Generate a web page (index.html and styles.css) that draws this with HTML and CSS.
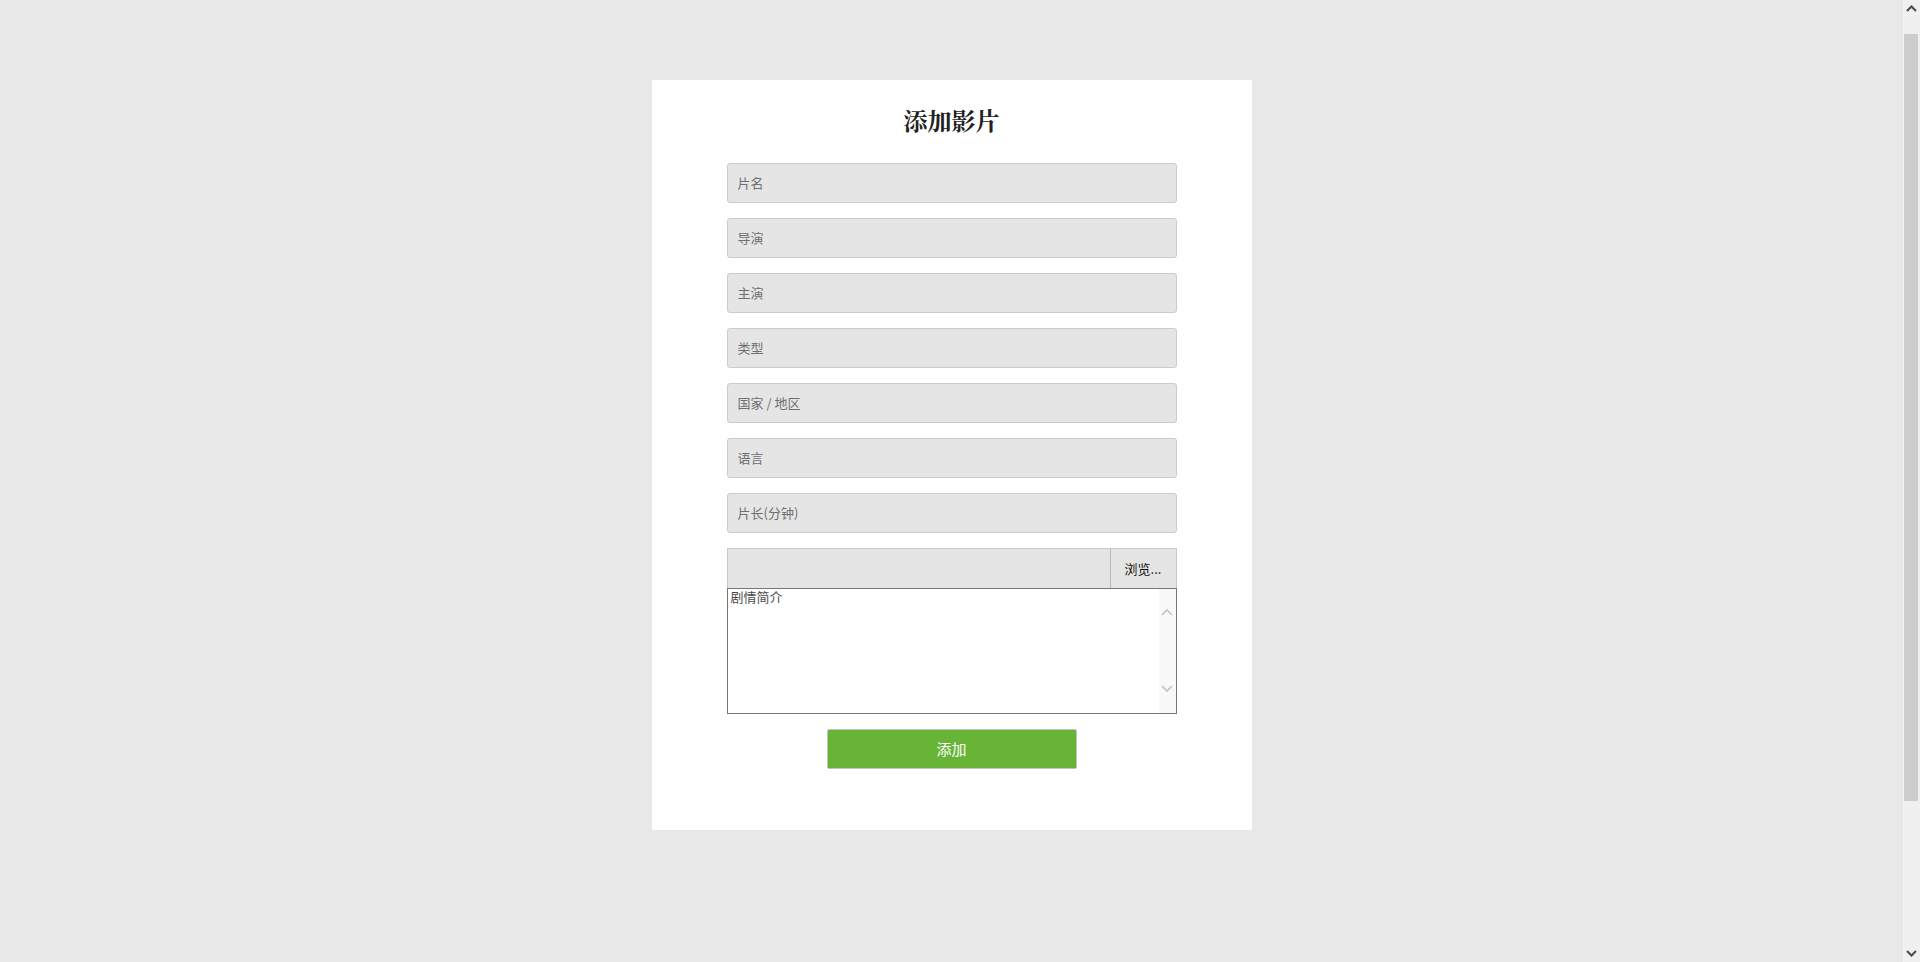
FILE: index.html
```html
<!DOCTYPE html>
<html lang="zh-CN">
<head>
<meta charset="utf-8">
<title>添加影片</title>
<link rel="stylesheet" href="styles.css">
</head>
<body>
<div class="screen">
  <main class="main">
    <form class="card">
      <h1 class="title">添加影片</h1>
      <input class="field" type="text" placeholder="片名">
      <input class="field" type="text" placeholder="导演">
      <input class="field" type="text" placeholder="主演">
      <input class="field" type="text" placeholder="类型">
      <input class="field" type="text" placeholder="国家 / 地区">
      <input class="field" type="text" placeholder="语言">
      <input class="field" type="text" placeholder="片长(分钟)">
      <div class="file-row">
        <div class="file-path"></div>
        <div class="file-btn">浏览...</div>
      </div>
      <div class="textarea-box">
        <textarea class="summary" placeholder="剧情简介"></textarea>
        <div class="ta-scroll">
          <svg width="12" height="8" viewBox="0 0 12 8"><path d="M1 7 L6 2 L11 7" fill="none" stroke="#c2c2c2" stroke-width="1.6"/></svg>
          <svg width="12" height="8" viewBox="0 0 12 8"><path d="M1 1 L6 6 L11 1" fill="none" stroke="#c2c2c2" stroke-width="1.6"/></svg>
        </div>
      </div>
      <button class="submit" type="button">添加</button>
    </form>
  </main>
  <div class="scrollbar">
    <div class="sb-arrow">
      <svg width="11" height="7" viewBox="0 0 11 7"><path d="M1 6 L5.5 1.5 L10 6" fill="none" stroke="#505050" stroke-width="2.2"/></svg>
    </div>
    <div class="sb-track">
      <div class="sb-thumb"></div>
    </div>
    <div class="sb-arrow">
      <svg width="11" height="7" viewBox="0 0 11 7"><path d="M1 1 L5.5 5.5 L10 1" fill="none" stroke="#505050" stroke-width="2.2"/></svg>
    </div>
  </div>
</div>
</body>
</html>
```

FILE: styles.css
```css
html, body {
  margin: 0;
  padding: 0;
  height: 100%;
  overflow: hidden;
}

body {
  background: #e8e8e8;
  font-family: "Noto Sans CJK SC", "Liberation Sans", sans-serif;
  font-size: 13px;
  color: #333;
}

.screen {
  display: flex;
  height: 962px;
}

.main {
  flex: 1;
  display: flex;
  justify-content: center;
  align-items: flex-start;
  padding-top: 80px;
}

.card {
  width: 600px;
  box-sizing: border-box;
  background: #fff;
  padding: 25px 75px 61px;
  display: flex;
  flex-direction: column;
  align-items: center;
}

.title {
  margin: 0 0 28px;
  height: 30px;
  line-height: 30px;
  font-family: "Noto Serif CJK SC", "Noto Sans CJK SC", serif;
  font-size: 24px;
  font-weight: bold;
  color: #222;
}

.field {
  width: 450px;
  height: 40px;
  box-sizing: border-box;
  margin: 0 0 15px;
  padding: 0 0 2px 10px;
  border: 1px solid #cbcbcb;
  border-radius: 3px;
  background: #e5e5e5;
  font-family: "Noto Sans CJK SC", "Liberation Sans", sans-serif;
  font-size: 13px;
  color: #555;
  outline: none;
}

.field::placeholder {
  color: #6f6f6f;
}

.file-row {
  width: 450px;
  height: 40px;
  box-sizing: border-box;
  display: flex;
  border: 1px solid #c8c8c8;
  border-bottom: none;
  background: #e5e5e5;
}

.file-path {
  flex: 1;
}

.file-btn {
  width: 66px;
  box-sizing: border-box;
  border-left: 1px solid #b9b9b9;
  display: flex;
  align-items: center;
  justify-content: center;
  color: #111;
  font-size: 13px;
  padding-bottom: 1px;
}

.textarea-box {
  width: 450px;
  height: 126px;
  box-sizing: border-box;
  border: 1px solid #767676;
  background: #fff;
  display: flex;
  margin-bottom: 15px;
}

.summary {
  flex: 1;
  border: none;
  outline: none;
  resize: none;
  margin: 0;
  padding: 0 3px;
  font-family: "Noto Sans CJK SC", "Liberation Sans", sans-serif;
  font-size: 13px;
  line-height: 16px;
  color: #333;
  background: transparent;
}

.summary::placeholder {
  color: #4a4a4a;
}

.ta-scroll {
  width: 17px;
  background: #f8f8f8;
  display: flex;
  flex-direction: column;
  align-items: center;
  justify-content: space-between;
  padding: 19px 0 20px;
  box-sizing: border-box;
}

.ta-scroll svg {
  display: block;
}

.submit {
  width: 250px;
  height: 40px;
  box-sizing: border-box;
  border: 1px solid #c4c4c4;
  border-radius: 2px;
  background: #67b437;
  color: #fff;
  font-family: "Noto Sans CJK SC", "Liberation Sans", sans-serif;
  font-size: 15px;
  padding: 0 0 2px;
  cursor: pointer;
}

.scrollbar {
  width: 17px;
  height: 962px;
  background: #f0f0f0;
  display: flex;
  flex-direction: column;
}

.sb-arrow {
  height: 17px;
  display: flex;
  align-items: center;
  justify-content: center;
}

.sb-arrow svg {
  display: block;
}

.sb-track {
  flex: 1;
  padding: 17px 2px 0 1px;
  box-sizing: border-box;
}

.sb-thumb {
  height: 767px;
  background: #cdcdcd;
}
```
